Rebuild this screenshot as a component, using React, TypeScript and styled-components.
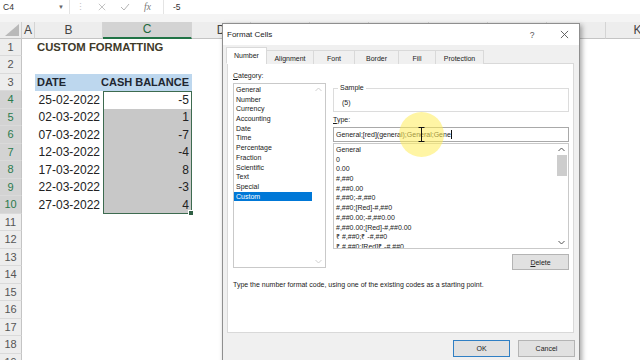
import React from 'react';
import styled, { createGlobalStyle, css } from 'styled-components';

const GlobalStyle = createGlobalStyle`
  html, body {
    margin: 0;
    padding: 0;
    background: #fff;
  }
  body {
    width: 640px;
    height: 360px;
    overflow: hidden;
    font-family: "Liberation Sans", Arial, sans-serif;
  }
`;

const Screen = styled.div`
  position: relative;
  width: 640px;
  height: 360px;
  overflow: hidden;
  background: #fff;
`;

/* ---------- formula bar ---------- */

const FormulaBar = styled.div`
  display: flex;
  align-items: center;
  height: 14px;
  background: #fff;
  font-size: 8.5px;
  color: #333;
`;

const NameBox = styled.div`
  box-sizing: border-box;
  width: 70px;
  height: 14px;
  padding: 0 5px 0 3px;
  display: flex;
  align-items: center;
  justify-content: space-between;
  border-right: 1px solid #e4e4e4;
`;

const Caret = styled.span`
  font-size: 6px;
  color: #666;
`;

const Grip = styled.div`
  width: 20px;
  text-align: center;
  color: #c4c4c4;
  font-size: 9px;
`;

const BarIcon = styled.div`
  width: 23px;
  display: flex;
  justify-content: center;
  align-items: center;
  color: #b0b0b0;
`;

const Fx = styled.span`
  font-family: "Liberation Serif", serif;
  font-style: italic;
  font-size: 9.5px;
  color: #777;
`;

const FormulaInput = styled.div`
  flex: 1;
  height: 14px;
  display: flex;
  align-items: center;
  padding-left: 9px;
  margin-left: 4px;
  border-left: 1px solid #e4e4e4;
`;

const Strip = styled.div`
  height: 7.5px;
  background: #f4f4f4;
`;

/* ---------- sheet ---------- */

const Sheet = styled.div`
  display: grid;
  grid-template-columns: 22px 13px 68px 89px repeat(7, 59.15px) 64px;
  grid-template-rows: 17px repeat(19, 17.5px);
  width: 640px;
  overflow: hidden;
  font-size: 12px;
  color: #222;
`;

const Corner = styled.div`
  position: relative;
  background: #ededed;
  border-right: 1px solid #cfcfcf;
  border-bottom: 1px solid #c4c4c4;
`;

const ColHead = styled.div<{ $selected?: boolean }>`
  box-sizing: border-box;
  display: flex;
  align-items: center;
  justify-content: center;
  background: #ededed;
  border-right: 1px solid #d4d4d4;
  border-bottom: 1px solid #c4c4c4;
  color: #444;
  font-size: 12px;
  ${(p) =>
    p.$selected &&
    css`
      background: #d3d3d3;
      color: #1f6a40;
      border-bottom: 2px solid #217346;
    `}
`;

const RowHead = styled.div<{ $selected?: boolean }>`
  box-sizing: border-box;
  display: flex;
  align-items: center;
  justify-content: center;
  background: #ededed;
  border-right: 1px solid #c4c4c4;
  border-bottom: 1px solid #dadada;
  color: #555;
  font-size: 11px;
  ${(p) =>
    p.$selected &&
    css`
      background: #d3d3d3;
      color: #2a7a4c;
    `}
`;

const Cell = styled.div<{
  $align?: 'left' | 'right';
  $bold?: boolean;
  $fill?: string;
  $size?: number;
  $color?: string;
  $edges?: string;
}>`
  position: relative;
  box-sizing: border-box;
  display: flex;
  align-items: center;
  justify-content: ${(p) => (p.$align === 'right' ? 'flex-end' : 'flex-start')};
  padding: 0 3px 0 2px;
  white-space: nowrap;
  overflow: visible;
  background: ${(p) => p.$fill || 'transparent'};
  font-weight: ${(p) => (p.$bold ? 700 : 400)};
  font-size: ${(p) => p.$size || 12}px;
  color: ${(p) => p.$color || '#222'};
  box-shadow: ${(p) => p.$edges || 'none'};
`;

const FillHandle = styled.span`
  position: absolute;
  right: -2px;
  bottom: -2px;
  width: 4px;
  height: 4px;
  background: #2f5f44;
  border: 1px solid #fff;
`;

/* ---------- dialog ---------- */

const Dialog = styled.div`
  position: absolute;
  left: 222px;
  top: 23px;
  box-sizing: border-box;
  width: 358px;
  height: 345px;
  background: #f0f0f0;
  border: 1px solid #8f8f8f;
  box-shadow: 2px 2px 5px rgba(0, 0, 0, 0.35);
  display: flex;
  flex-direction: column;
  font-family: "Liberation Sans", Arial, sans-serif;
  font-size: 7px;
  color: #1a1a1a;
`;

const TitleBar = styled.div`
  height: 21px;
  background: #fff;
  display: flex;
  align-items: center;
  padding-left: 4px;
`;

const Title = styled.div`
  flex: 1;
  font-size: 8px;
  color: #222;
`;

const TitleButton = styled.div<{ $w: number }>`
  width: ${(p) => p.$w}px;
  display: flex;
  align-items: center;
  justify-content: center;
  color: #555;
  font-size: 8.5px;
`;

const Tabs = styled.div`
  display: flex;
  align-items: flex-end;
  height: 17px;
  margin-top: 2px;
  padding-left: 4px;
  position: relative;
  z-index: 1;
`;

const Tab = styled.div<{ $w: number; $active?: boolean }>`
  box-sizing: border-box;
  width: ${(p) => p.$w}px;
  height: ${(p) => (p.$active ? 17 : 14)}px;
  display: flex;
  align-items: center;
  justify-content: center;
  padding-top: ${(p) => (p.$active ? 0 : 1)}px;
  border: 1px solid #d9d9d9;
  border-bottom: ${(p) => (p.$active ? '1px solid #fff' : 'none')};
  margin-left: -1px;
  background: ${(p) => (p.$active ? '#fff' : '#f0f0f0')};
  color: #222;
`;

const Panel = styled.div`
  box-sizing: border-box;
  height: 270px;
  margin: -1px 5px 0 4px;
  padding: 7px 4px 0 5px;
  background: #fff;
  border: 1px solid #d9d9d9;
`;

const PanelGrid = styled.div`
  display: grid;
  grid-template-columns: 93px 1fr;
  column-gap: 7px;
`;

const Column = styled.div`
  display: flex;
  flex-direction: column;
`;

const Label = styled.div`
  line-height: 10px;
  height: 10px;
`;

const ListBox = styled.div<{ $h: number; $mt: number }>`
  box-sizing: border-box;
  display: flex;
  height: ${(p) => p.$h}px;
  margin-top: ${(p) => p.$mt}px;
  border: 1px solid #c9c9c9;
  overflow: hidden;
`;

const Items = styled.div`
  flex: 1;
  padding-top: 1px;
`;

const Item = styled.div<{ $selected?: boolean; $pad: number }>`
  height: 9.7px;
  line-height: 9.7px;
  padding-left: ${(p) => p.$pad}px;
  white-space: nowrap;
  background: ${(p) => (p.$selected ? '#0078d7' : 'transparent')};
  color: ${(p) => (p.$selected ? '#fff' : '#1a1a1a')};
`;

const Scroll = styled.div<{ $w: number }>`
  width: ${(p) => p.$w}px;
  display: flex;
  flex-direction: column;
  align-items: center;
  padding: 3px 0;
  box-sizing: border-box;
`;

const Thumb = styled.div`
  width: 10px;
  height: 21px;
  margin-top: 3px;
  background: #cdcdcd;
`;

const Spacer = styled.div`
  flex: 1;
`;

const SampleSet = styled.fieldset`
  margin: 12px 0 0;
  padding: 0 8px 3px;
  min-width: 0;
  border: 1px solid #dcdcdc;
`;

const SampleLegend = styled.legend`
  margin-left: -4px;
  padding: 0 2px;
  font-size: 7px;
  line-height: 10px;
`;

const SampleValue = styled.div`
  margin-top: 5px;
  line-height: 10px;
  height: 10px;
`;

const TypeLabel = styled(Label)`
  margin-top: 3px;
`;

const TypeInput = styled.div`
  box-sizing: border-box;
  height: 15px;
  margin-top: 2px;
  padding-left: 2px;
  display: flex;
  align-items: center;
  border: 1px solid #a9a9a9;
  white-space: nowrap;
`;

const TextCaret = styled.span`
  display: inline-block;
  width: 0;
  height: 9px;
  border-left: 1px solid #111;
`;

const Button = styled.div<{ $primary?: boolean }>`
  box-sizing: border-box;
  width: 57px;
  height: ${(p) => (p.$primary ? 17 : 17)}px;
  display: flex;
  align-items: center;
  justify-content: center;
  background: #e1e1e1;
  border: 1px solid ${(p) => (p.$primary ? '#2f7fc4' : '#b4b4b4')};
  color: #222;
`;

const DeleteButton = styled(Button)`
  align-self: flex-end;
  height: 16px;
  margin-top: 5px;
`;

const Description = styled.div`
  margin-top: 10px;
  line-height: 10px;
  height: 10px;
  white-space: nowrap;
`;

const ButtonRow = styled.div`
  display: flex;
  justify-content: flex-end;
  gap: 8px;
  margin-top: 7px;
  padding-right: 4px;
`;

/* ---------- overlays ---------- */

const Spotlight = styled.div`
  position: absolute;
  left: 399px;
  top: 112px;
  width: 45px;
  height: 45px;
  border-radius: 50%;
  background: rgba(255, 236, 90, 0.55);
  pointer-events: none;
`;

const IBeam = styled.svg`
  position: absolute;
  left: 418px;
  top: 127px;
`;

/* ---------- icons ---------- */

const Chevron = ({ up, color }: { up?: boolean; color: string }) => (
  <svg width="7" height="5" viewBox="0 0 7 5">
    <polyline
      points={up ? '0.5,4 3.5,1 6.5,4' : '0.5,1 3.5,4 6.5,1'}
      fill="none"
      stroke={color}
      strokeWidth="1"
    />
  </svg>
);

const Cross = ({ size, color }: { size: number; color: string }) => (
  <svg width={size} height={size} viewBox="0 0 10 10">
    <path d="M1 1L9 9M9 1L1 9" stroke={color} strokeWidth="1" />
  </svg>
);

/* ---------- data ---------- */

const columns = ['A', 'B', 'C', 'D', 'E', 'F', 'G', 'H', 'I', 'J', 'K'];

const records: [string, string][] = [
  ['25-02-2022', '-5'],
  ['02-03-2022', '1'],
  ['07-03-2022', '-7'],
  ['12-03-2022', '-4'],
  ['17-03-2022', '8'],
  ['22-03-2022', '-3'],
  ['27-03-2022', '4'],
];

const categories = [
  'General',
  'Number',
  'Currency',
  'Accounting',
  'Date',
  'Time',
  'Percentage',
  'Fraction',
  'Scientific',
  'Text',
  'Special',
  'Custom',
];

const formats = [
  'General',
  '0',
  '0.00',
  '#,##0',
  '#,##0.00',
  '#,##0;-#,##0',
  '#,##0;[Red]-#,##0',
  '#,##0.00;-#,##0.00',
  '#,##0.00;[Red]-#,##0.00',
  '₹ #,##0;₹ -#,##0',
  '₹ #,##0;[Red]₹ -#,##0',
];

const tabs: [string, number][] = [
  ['Number', 41],
  ['Alignment', 48],
  ['Font', 42],
  ['Border', 45],
  ['Fill', 38],
  ['Protection', 49],
];

const SEL = '#3d6b50';

function selectionEdges(row: number) {
  const parts = [`inset 1px 0 ${SEL}`, `inset -1px 0 ${SEL}`];
  if (row === 4) parts.push(`inset 0 1px ${SEL}`);
  if (row === 10) parts.push(`inset 0 -1px ${SEL}`);
  return parts.join(', ');
}

function renderRow(row: number) {
  const cells: React.ReactNode[] = [];
  const selected = row >= 4 && row <= 10;
  cells.push(
    <RowHead key={`h${row}`} $selected={selected}>
      {row}
    </RowHead>
  );
  columns.forEach((col) => {
    const key = `${col}${row}`;
    if (row === 1 && col === 'B') {
      cells.push(
        <Cell key={key} $bold $size={11.3} $color="#3f3a29">
          CUSTOM FORMATTING
        </Cell>
      );
    } else if (row === 3 && col === 'B') {
      cells.push(
        <Cell key={key} $bold $size={11} $fill="#bdd7ee" $color="#1f2630">
          DATE
        </Cell>
      );
    } else if (row === 3 && col === 'C') {
      cells.push(
        <Cell key={key} $bold $size={11} $fill="#bdd7ee" $color="#1f2630" $align="right">
          CASH BALANCE
        </Cell>
      );
    } else if (selected && col === 'B') {
      cells.push(
        <Cell key={key} $align="right">
          {records[row - 4][0]}
        </Cell>
      );
    } else if (selected && col === 'C') {
      cells.push(
        <Cell
          key={key}
          $align="right"
          $fill={row === 4 ? '#fff' : '#c8c8c8'}
          $edges={selectionEdges(row)}
        >
          {records[row - 4][1]}
          {row === 10 && <FillHandle />}
        </Cell>
      );
    } else {
      cells.push(<Cell key={key} />);
    }
  });
  return cells;
}

export default function App() {
  const rows = Array.from({ length: 19 }, (_, i) => i + 1);

  return (
    <Screen>
      <GlobalStyle />

      <FormulaBar>
        <NameBox>
          <span>C4</span>
          <Caret>▼</Caret>
        </NameBox>
        <Grip>⋮</Grip>
        <BarIcon>
          <Cross size={8} color="#b4b4b4" />
        </BarIcon>
        <BarIcon>
          <svg width="10" height="8" viewBox="0 0 10 8">
            <polyline points="1,4 4,7 9,1" fill="none" stroke="#b4b4b4" strokeWidth="1" />
          </svg>
        </BarIcon>
        <BarIcon>
          <Fx>fx</Fx>
        </BarIcon>
        <FormulaInput>-5</FormulaInput>
      </FormulaBar>
      <Strip />

      <Sheet>
        <Corner>
          <svg
            width="14"
            height="12"
            viewBox="0 0 14 12"
            style={{ position: 'absolute', right: 2, bottom: 2 }}
          >
            <polygon points="14,0 14,12 0,12" fill="#b9b9b9" />
          </svg>
        </Corner>
        {columns.map((c) => (
          <ColHead key={c} $selected={c === 'C'}>
            {c}
          </ColHead>
        ))}
        {rows.map((r) => renderRow(r))}
      </Sheet>

      <Dialog>
        <TitleBar>
          <Title>Format Cells</Title>
          <TitleButton $w={16}>?</TitleButton>
          <TitleButton $w={13} />
          <TitleButton $w={22}>
            <Cross size={9} color="#555" />
          </TitleButton>
          <TitleButton $w={4} />
        </TitleBar>

        <Tabs>
          {tabs.map(([name, w], i) => (
            <Tab key={name} $w={w} $active={i === 0}>
              {name}
            </Tab>
          ))}
        </Tabs>

        <Panel>
          <PanelGrid>
            <Column>
              <Label>
                <u>C</u>ategory:
              </Label>
              <ListBox $h={185} $mt={2}>
                <Items>
                  {categories.map((c) => (
                    <Item key={c} $pad={2} $selected={c === 'Custom'}>
                      {c}
                    </Item>
                  ))}
                </Items>
                <Scroll $w={13}>
                  <Chevron up color="#cfcfcf" />
                  <Spacer />
                  <Chevron color="#cfcfcf" />
                </Scroll>
              </ListBox>
            </Column>

            <Column>
              <SampleSet>
                <SampleLegend>Sample</SampleLegend>
                <SampleValue>(5)</SampleValue>
              </SampleSet>
              <TypeLabel>
                <u>T</u>ype:
              </TypeLabel>
              <TypeInput>
                General;[red](general);General;Gene
                <TextCaret />
              </TypeInput>
              <ListBox $h={106} $mt={1}>
                <Items>
                  {formats.map((f) => (
                    <Item key={f} $pad={2}>
                      {f}
                    </Item>
                  ))}
                </Items>
                <Scroll $w={13}>
                  <Chevron up color="#555" />
                  <Thumb />
                  <Spacer />
                  <Chevron color="#555" />
                </Scroll>
              </ListBox>
              <DeleteButton>
                <span>
                  <u>D</u>elete
                </span>
              </DeleteButton>
            </Column>
          </PanelGrid>
          <Description>
            Type the number format code, using one of the existing codes as a starting point.
          </Description>
        </Panel>

        <ButtonRow>
          <Button $primary>OK</Button>
          <Button>Cancel</Button>
        </ButtonRow>
      </Dialog>

      <Spotlight />
      <IBeam width="7" height="15" viewBox="0 0 7 15">
        <path d="M0.5 0.5H6.5M3.5 0.5V14.5M0.5 14.5H6.5" stroke="#111" strokeWidth="1" fill="none" />
      </IBeam>
    </Screen>
  );
}
